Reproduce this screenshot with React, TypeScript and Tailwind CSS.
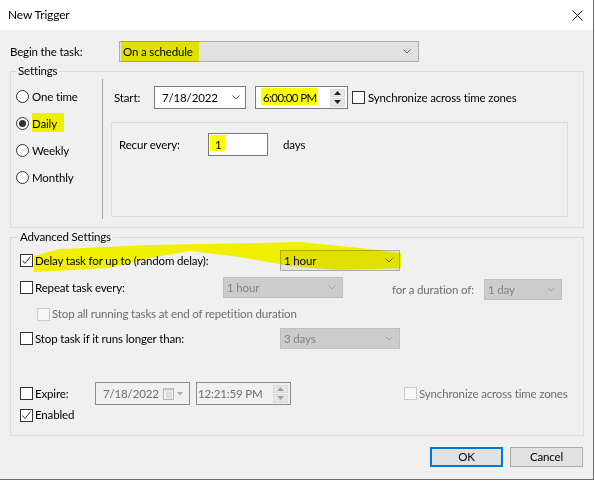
import React from 'react';

const Chevron = ({ disabled }: { disabled?: boolean }) => (
  <svg width="8" height="5" viewBox="0 0 8 5" className="shrink-0">
    <polyline points="0.5,0.5 4,4 7.5,0.5" fill="none" stroke={disabled ? '#a6a6a6' : '#5a5a5a'} strokeWidth="1" />
  </svg>
);

const Check = ({ checked, disabled }: { checked?: boolean; disabled?: boolean }) => (
  <span
    className={`w-[13px] h-[13px] shrink-0 border flex items-center justify-center ${
      disabled ? 'border-[#cccccc] bg-[#f7f7f7]' : 'border-[#333333] bg-white'
    }`}
  >
    {checked && (
      <svg width="11" height="11" viewBox="0 0 11 11">
        <polyline points="1.5,5.5 4,8.5 9.5,1.5" fill="none" stroke="#333333" strokeWidth="1" />
      </svg>
    )}
  </span>
);

const Radio = ({ label, checked }: { label: string; checked?: boolean }) => (
  <div className="h-[27px] flex items-center pl-[5px]">
    <span className="w-[13px] h-[13px] rounded-full border border-[#333333] bg-white flex items-center justify-center">
      {checked && <span className="w-[7px] h-[7px] rounded-full bg-[#333333]" />}
    </span>
    <span className="ml-[3px]">{label}</span>
  </div>
);

const Combo = ({ value, disabled, w }: { value: string; disabled?: boolean; w: string }) => (
  <div
    className={`${w} h-[21px] shrink-0 border flex items-center justify-between pl-[3px] pr-[6px] ${
      disabled ? 'bg-[#cccccc] border-[#bfbfbf] text-[#838383]' : 'bg-[#e1e1e1] border-[#adadad]'
    }`}
  >
    <span>{value}</span>
    <Chevron disabled={disabled} />
  </div>
);

const Spinner = ({ disabled }: { disabled?: boolean }) => (
  <div className="w-[15px] h-[18px] flex flex-col gap-px shrink-0">
    <div className="flex-1 bg-[#e6e6e6] border border-[#dadada] flex items-center justify-center">
      <svg width="7" height="4" viewBox="0 0 7 4">
        <polygon points="3.5,0 7,4 0,4" fill={disabled ? '#a0a0a0' : '#222222'} />
      </svg>
    </div>
    <div className="flex-1 bg-[#e6e6e6] border border-[#dadada] flex items-center justify-center">
      <svg width="7" height="4" viewBox="0 0 7 4">
        <polygon points="0,0 7,0 3.5,4" fill={disabled ? '#a0a0a0' : '#222222'} />
      </svg>
    </div>
  </div>
);

export default function App() {
  return (
    <div className="relative w-[595px] h-[481px] bg-white text-[11.5px] tracking-[-0.15px] leading-[16px] text-black font-['Lato',sans-serif]">
      <div className="w-[594px] h-[480px] flex flex-col border-r border-b border-[#6b6b6b]">
        {/* title bar */}
        <div className="h-[30px] bg-white flex items-center justify-between pl-[8px] pr-[10px]">
          <span className="text-[12px]">New Trigger</span>
          <svg width="11" height="11" viewBox="0 0 11 11">
            <path d="M0.5 0.5 L10.5 10.5 M10.5 0.5 L0.5 10.5" stroke="#111111" strokeWidth="1" />
          </svg>
        </div>

        <div className="flex-1 bg-[#f0f0f0] pl-[10px] pr-[9px] flex flex-col">
          {/* begin the task */}
          <div className="mt-[11px] h-[21px] flex items-center">
            <span className="w-[109px]">Begin the task:</span>
            <div className="w-[300px] h-[21px] bg-[#e1e1e1] border border-[#adadad] flex items-center justify-between pl-[3px] pr-[7px]">
              <span>On a schedule</span>
              <Chevron />
            </div>
          </div>

          {/* settings */}
          <fieldset className="mt-[1px] border border-[#dcdcdc] pb-[8px]">
            <legend className="ml-[5px] px-[2px]">Settings</legend>
            <div className="h-[140px] flex">
              <div className="w-[91px] pt-[4px] flex flex-col">
                <Radio label="One time" />
                <Radio label="Daily" checked />
                <Radio label="Weekly" />
                <Radio label="Monthly" />
              </div>
              <div className="w-px bg-[#a0a0a0]" />
              <div className="pl-[8px] flex flex-col">
                <div className="mt-[7px] h-[23px] flex items-center">
                  <span className="w-[43px] pl-[3px]">Start:</span>
                  <div className="w-[92px] h-[23px] bg-white border border-[#7a7a7a] flex items-center justify-between pl-[7px] pr-[5px]">
                    <span>7/18/2022</span>
                    <Chevron />
                  </div>
                  <div className="ml-[9px] w-[93px] h-[23px] bg-white border border-[#7a7a7a] flex items-center justify-between pl-[7px] pr-[2px]">
                    <span className="tracking-[-0.6px]">6:00:00 PM</span>
                    <Spinner />
                  </div>
                  <span className="ml-[4px]"><Check /></span>
                  <span className="ml-[3px]">Synchronize across time zones</span>
                </div>
                <div className="mt-[13px] w-[457px] h-[95px] border border-[#dcdcdc]">
                  <div className="mt-[10px] h-[23px] flex items-center pl-[7px]">
                    <span className="w-[89px]">Recur every:</span>
                    <div className="w-[60px] h-[23px] bg-white border border-[#7a7a7a] flex items-center pl-[6px]">1</div>
                    <span className="ml-[15px]">days</span>
                  </div>
                </div>
              </div>
            </div>
          </fieldset>

          {/* advanced settings */}
          <fieldset className="mt-[1px] border border-[#dcdcdc] pl-[9px] pb-[12px]">
            <legend className="ml-[-2px] px-[2px]">Advanced Settings</legend>
            <div className="mt-[5px] h-[21px] flex items-center">
              <div className="w-[260px] flex items-center">
                <Check checked />
                <span className="ml-[2px]">Delay task for up to (random delay):</span>
              </div>
              <Combo value="1 hour" w="w-[120px]" />
            </div>

            <div className="mt-[6px] h-[23px] flex items-start">
              <div className="w-[203px] h-[21px] flex items-center">
                <Check />
                <span className="ml-[2px]">Repeat task every:</span>
              </div>
              <Combo value="1 hour" w="w-[120px]" disabled />
              <span className="ml-[49px] w-[92px] mt-[2px] h-[21px] flex items-center text-[#6d6d6d]">for a duration of:</span>
              <div className="mt-[2px]">
                <Combo value="1 day" w="w-[78px]" disabled />
              </div>
            </div>

            <div className="mt-[5px] h-[18px] flex items-center pl-[17px]">
              <Check disabled />
              <span className="ml-[2px] text-[#6d6d6d]">Stop all running tasks at end of repetition duration</span>
            </div>

            <div className="mt-[5px] h-[21px] flex items-center">
              <div className="w-[260px] flex items-center">
                <Check />
                <span className="ml-[2px]">Stop task if it runs longer than:</span>
              </div>
              <Combo value="3 days" w="w-[120px]" disabled />
            </div>

            <div className="mt-[33px] h-[23px] flex items-center">
              <div className="w-[75px] flex items-center">
                <Check />
                <span className="ml-[2px]">Expire:</span>
              </div>
              <div className="w-[95px] h-[23px] border border-[#8c8c8c] flex items-center justify-between pl-[7px] pr-[6px] text-[#6d6d6d]">
                <span>7/18/2022</span>
                <span className="flex items-center gap-[2px]">
                  <svg width="12" height="12" viewBox="0 0 12 12">
                    <rect x="0.5" y="0.5" width="10" height="11" fill="#f4f4f4" stroke="#b4b4b4" />
                    <rect x="0.5" y="0.5" width="10" height="2" fill="#c8c8c8" />
                    <path d="M3 5 H9 M3 7 H9 M3 9 H9 M4 4 V11 M6 4 V11 M8 4 V11" stroke="#cfcfcf" strokeWidth="0.8" />
                  </svg>
                  <svg width="6" height="4" viewBox="0 0 6 4">
                    <polygon points="0,0 6,0 3,3.5" fill="#b0b0b0" />
                  </svg>
                </span>
              </div>
              <div className="ml-[6px] w-[95px] h-[23px] border border-[#8c8c8c] flex items-center justify-between pl-[1px] pr-[2px] text-[#6d6d6d]">
                <span>12:21:59 PM</span>
                <Spinner disabled />
              </div>
              <span className="ml-[113px]"><Check disabled /></span>
              <span className="ml-[2px] text-[#6d6d6d]">Synchronize across time zones</span>
            </div>

            <div className="mt-[2px] h-[16px] flex items-center">
              <Check checked />
              <span className="ml-[2px]">Enabled</span>
            </div>
          </fieldset>

          <div className="mt-[11px] flex justify-end gap-[7px] pr-px">
            <button className="w-[73px] h-[20px] border-2 border-[#0078d7] bg-[#e1e1e1] flex items-center justify-center">OK</button>
            <button className="w-[73px] h-[20px] border border-[#adadad] bg-[#e1e1e1] flex items-center justify-center">Cancel</button>
          </div>
        </div>
      </div>

      {/* highlighter marks */}
      <svg width="595" height="481" viewBox="0 0 595 481" className="absolute inset-0 pointer-events-none mix-blend-multiply">
        <g fill="#ffff00">
          <rect x="121" y="41" width="78" height="21" />
          <rect x="32" y="113" width="32" height="19" />
          <rect x="261" y="88" width="56" height="17" />
          <rect x="210" y="135" width="16" height="16" />
          <polygon points="34,256 60,249 150,245 300,242 360,248 401,253 401,268 340,270 290,266 240,257 190,251 150,258 110,268 34,272" />
        </g>
      </svg>
    </div>
  );
}
